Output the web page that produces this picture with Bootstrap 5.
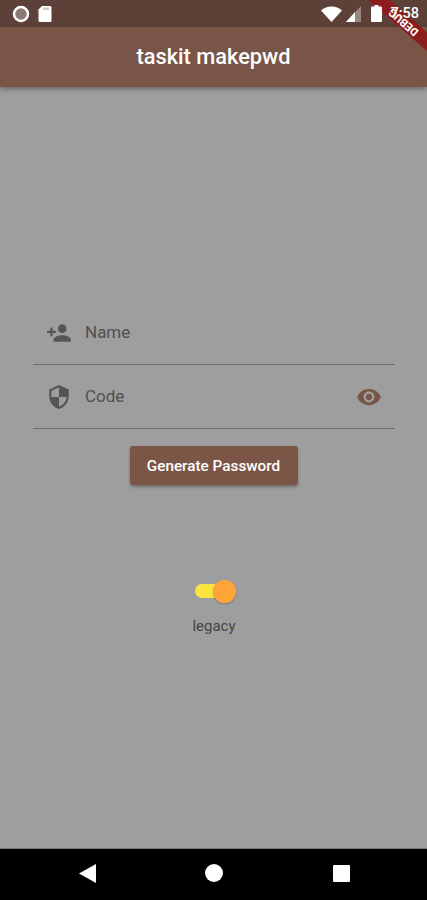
<!DOCTYPE html>
<html lang="en">
<head>
    <meta charset="UTF-8">
    <title>taskit makepwd</title>
    <link rel="stylesheet" href="https://cdn.jsdelivr.net/npm/bootstrap@5.3.3/dist/css/bootstrap.min.css">
    <script src="https://cdn.jsdelivr.net/npm/bootstrap@5.3.3/dist/js/bootstrap.bundle.min.js"></script>
    <style>
    body { font-family: Roboto, "Liberation Sans", sans-serif; background: #9e9e9e; overflow: hidden; }
    .phone-screen { width: 427px; height: 900px; }
    .status-strip { height: 27px; background: transparent; color: #fff; font-size: 14.5px; font-weight: 500; padding: 0 8px 0 12px; position: relative; z-index: 3; }
    .status-bg { position: absolute; top: 0; left: 0; width: 427px; height: 27px; background: #5d4037; z-index: 0; }
    .app-strip { height: 60px; background: #795548; color: #fff; font-size: 21.8px; font-weight: 500; box-shadow: 0 2px 5px rgba(0,0,0,.35); z-index: 1; }
    .form-area { padding: 214px 32px 0 33px; }
    .pwd-field { height: 64px; border-bottom: 1px solid #6f6f6f; color: #505050; font-size: 17px; padding: 0 13px 0 13px; }
    .pwd-field svg { fill: #555; }
    .pwd-field .eye-icon { fill: #795548; }
    .pwd-label { margin-left: 13px; }
    .gen-btn { width: 168px; height: 39px; margin-top: 17px; margin-right: 1px; background: #7b5647; border: 0; border-radius: 3px; color: #fff; font-size: 15.3px; font-weight: 500; padding: 1px 0 0; box-shadow: 0 2px 3px rgba(0,0,0,.3); }
    .switch-track { width: 30px; height: 14px; border-radius: 7px; background: #fde541; margin-top: 99px; position: relative; margin-left: -8px; }
    .switch-thumb { width: 23px; height: 23px; border-radius: 50%; background: #ffa537; position: absolute; right: -11px; top: -4px; box-shadow: 0 1px 2px rgba(0,0,0,.25); }
    .switch-label { color: #444; font-size: 15px; margin-top: 18px; line-height: 20px; }
    .nav-strip { height: 52px; background: #000; border-top: 1px solid #777; position: relative; }
    .ribbon-clip { position: absolute; top: 0; left: 0; width: 427px; height: 87px; overflow: hidden; z-index: 2; }
    .debug-ribbon { position: absolute; left: 352px; top: 13px; width: 100px; height: 14px; background: #8e1c1c; transform: rotate(41deg); color: #fff; font-size: 11px; font-weight: 700; line-height: 14px; text-align: center; }
    .debug-ribbon span { display: inline-block; transform: translateX(3px) rotate(180deg); }
    </style>
</head>
<body>
    <div class="phone-screen d-flex flex-column position-relative">
        <div class="status-bg"></div>
        <div class="status-strip d-flex align-items-center">
            <svg width="18" height="18" viewBox="0 0 18 18"><circle cx="9" cy="9" r="7" fill="#8a7a74" stroke="#fff" stroke-width="2.5"/></svg>
            <svg class="ms-2" width="14" height="16" viewBox="0 0 14 16"><path d="M4 0h8a1.500 1.500 0 0 1 1.500 1.500v13A1.500 1.500 0 0 1 12 16H2a1.500 1.500 0 0 1-1.500-1.500V3.500z" fill="#fff"/><path d="M6 1.500v2.500M8 1.500v2.500M10 1.500v2.500" stroke="#8a7a74" stroke-width=".8"/></svg>
            <svg class="ms-auto" width="21" height="16" viewBox="0 0 21 16"><path d="M0 4.500C3 1.800 6.500 .5 10.500 .5S18 1.800 21 4.500L10.500 16z" fill="#fff"/></svg>
            <svg class="ms-1" width="15" height="16" viewBox="0 0 15 16"><path d="M15 0v16H0z" fill="#9a8880"/><path d="M9 6v10H0z" fill="#fff"/></svg>
            <svg width="11" height="17" viewBox="0 0 11 17" style="margin-left:10px"><path d="M3.500 0h4v1.500H10a1 1 0 0 1 1 1V16a1 1 0 0 1-1 1H1a1 1 0 0 1-1-1V2.500a1 1 0 0 1 1-1h2.500z" fill="#fff"/></svg>
            <span class="ms-2">7:58</span>
        </div>
        <div class="app-strip d-flex align-items-center justify-content-center">taskit makepwd</div>
        <div class="ribbon-clip"><div class="debug-ribbon"><span>DEBUG</span></div></div>

        <div class="form-area flex-grow-1 d-flex flex-column">
            <div class="pwd-field d-flex align-items-center">
                <svg width="26" height="26" viewBox="0 0 24 24"><path d="M15 12c2.210 0 4-1.790 4-4s-1.790-4-4-4-4 1.790-4 4 1.790 4 4 4zm-9-2V7H4v3H1v2h3v3h2v-3h3v-2H6zm9 4c-2.670 0-8 1.340-8 4v2h16v-2c0-2.660-5.330-4-8-4z"/></svg>
                <span class="pwd-label">Name</span>
            </div>
            <div class="pwd-field d-flex align-items-center">
                <svg width="26" height="26" viewBox="0 0 24 24"><path d="M12 1L3 5v6c0 5.550 3.840 10.740 9 12 5.160-1.260 9-6.450 9-12V5l-9-4zm0 10.990h7c-.53 4.120-3.280 7.790-7 8.940V12H5V6.300l7-3.110v8.800z"/></svg>
                <span class="pwd-label">Code</span>
                <svg class="eye-icon ms-auto" width="26" height="26" viewBox="0 0 24 24"><path d="M12 4.500C7 4.500 2.730 7.610 1 12c1.730 4.390 6 7.500 11 7.500s9.270-3.110 11-7.500c-1.730-4.390-6-7.500-11-7.500zM12 17c-2.760 0-5-2.240-5-5s2.240-5 5-5 5 2.240 5 5-2.240 5-5 5zm0-8c-1.660 0-3 1.340-3 3s1.340 3 3 3 3-1.340 3-3-1.340-3-3-3z"/></svg>
            </div>
            <div class="d-flex flex-column align-items-center">
                <button class="btn gen-btn" type="button">Generate Password</button>
                <div class="switch-track"><div class="switch-thumb"></div></div>
                <div class="switch-label">legacy</div>
            </div>
        </div>

        <div class="nav-strip">
            <svg class="position-absolute" style="left:79px;top:15px" width="17" height="19" viewBox="0 0 17 19"><path d="M17 0v19L0 9.500z" fill="#fff"/></svg>
            <svg class="position-absolute" style="left:205px;top:15px" width="18" height="18" viewBox="0 0 18 18"><circle cx="9" cy="9" r="9" fill="#fff"/></svg>
            <svg class="position-absolute" style="left:333px;top:16px" width="17" height="17" viewBox="0 0 17 17"><rect width="17" height="17" rx="1" fill="#fff"/></svg>
        </div>
    </div>
</body>
</html>
